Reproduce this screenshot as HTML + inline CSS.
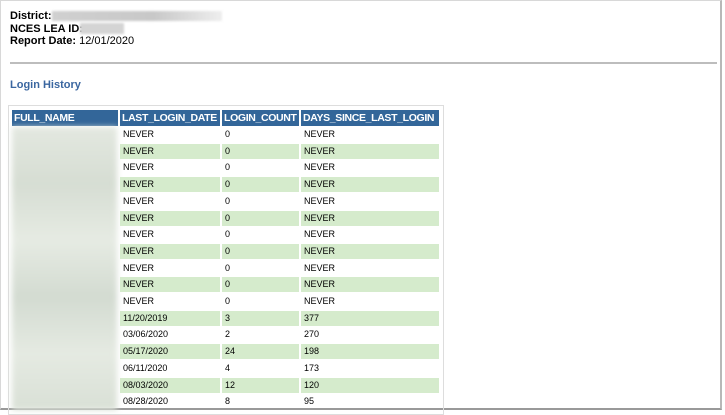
<!DOCTYPE html>
<html><head><style>
*{margin:0;padding:0;box-sizing:border-box}
body{width:725px;height:414px;background:#fff;font-family:"Liberation Sans",Arial,sans-serif;position:relative;overflow:hidden}
.frame{position:absolute;left:0;top:0;width:722px;height:410px;border:1px solid #d8d8d8;border-right:2px solid #b8b8b8;border-bottom:2px solid #999;}
.t{position:absolute;font-size:11px;color:#000;white-space:nowrap}
b{font-weight:bold}
.hr{position:absolute;left:10px;top:62px;width:707px;height:2px;background:#bdbdbd}
.lh{position:absolute;left:10px;top:79px;font-size:11px;font-weight:bold;color:#3a66a0}
.box{position:absolute;left:8px;top:105px;width:436px;height:310px;border:1px solid #ddd}
.h{position:absolute;top:110px;height:16px;background:#336699;color:#fff;font-size:10.5px;letter-spacing:-0.35px;font-weight:bold;line-height:16px;padding-left:2px;white-space:nowrap;overflow:hidden}
.c{position:absolute;height:15px;font-size:9px;line-height:15px;padding-left:3px;color:#000}
.g{background:#d5ebcc}
.blur{position:absolute;left:12px;top:127px;width:105px;height:283px;background:linear-gradient(180deg,#e3e8e0,#d6ddd3 20%,#e6ebe3 40%,#d3dbd1 60%,#e5eae2 80%,#d9e0d6);filter:blur(3px)}
</style></head><body>
<div class="frame"></div>
<div class="t" style="left:10px;top:10px"><b>District: </b></div>
<div style="position:absolute;left:52px;top:11px;width:170px;height:10px;background:linear-gradient(90deg,#d0d0d0,#c8c8c8 60%,#eee);filter:blur(1px)"></div>
<div class="t" style="left:10px;top:23px"><b>NCES LEA ID: </b></div>
<div style="position:absolute;left:80px;top:23px;width:44px;height:11px;background:#d4d4d4;filter:blur(1px)"></div>
<div class="t" style="left:10px;top:35px"><b>Report Date:</b> 12/01/2020</div>
<div class="hr"></div>
<div class="lh">Login History</div>
<div class="box"></div>
<div class="h" style="left:12px;width:106px">FULL_NAME</div>
<div class="h" style="left:120px;width:100px">LAST_LOGIN_DATE</div>
<div class="h" style="left:222px;width:77px">LOGIN_COUNT</div>
<div class="h" style="left:301px;width:138px">DAYS_SINCE_LAST_LOGIN</div>
<div class="blur"></div>
<div id="rows"></div>
<script>
var d=[["NEVER","0","NEVER"],["NEVER","0","NEVER"],["NEVER","0","NEVER"],["NEVER","0","NEVER"],["NEVER","0","NEVER"],["NEVER","0","NEVER"],["NEVER","0","NEVER"],["NEVER","0","NEVER"],["NEVER","0","NEVER"],["NEVER","0","NEVER"],["NEVER","0","NEVER"],["11/20/2019","3","377"],["03/06/2020","2","270"],["05/17/2020","24","198"],["06/11/2020","4","173"],["08/03/2020","12","120"],["08/28/2020","8","95"]];
var cols=[[120,100],[222,77],[301,138]],h="";
d.forEach(function(r,i){var y=Math.round(127+i*16.7);r.forEach(function(v,j){h+='<div class="c'+(i%2?' g':'')+'" style="left:'+cols[j][0]+'px;top:'+y+'px;width:'+cols[j][1]+'px">'+v+'</div>'})});
document.getElementById('rows').innerHTML=h;
</script>
</body></html>
